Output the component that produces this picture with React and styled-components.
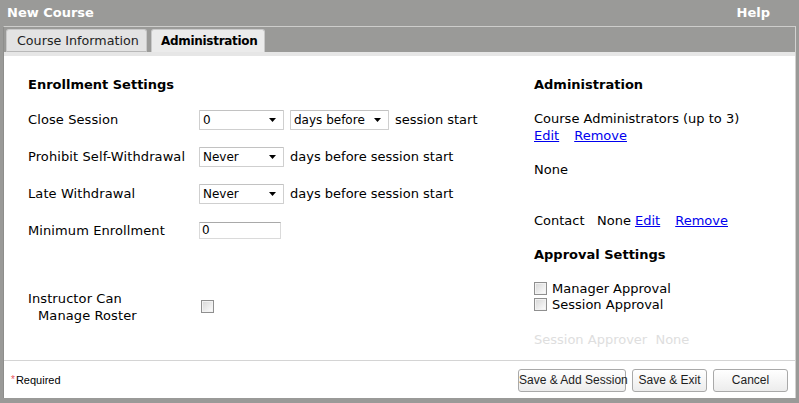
import styled, { createGlobalStyle } from "styled-components";

const GlobalStyle = createGlobalStyle`
    html, body {
        margin: 0;
        padding: 0;
        background: #9a9a98;
    }
    body {
        font-family: "DejaVu Sans", Verdana, sans-serif;
        font-size: 13px;
        color: #000;
    }
`;

const Arrow = () => (
    <svg width="7" height="4" viewBox="0 0 7 4">
        <path d="M0 0 H7 L3.5 4 Z" fill="#000" />
    </svg>
);

const Select = ({ value, width }) => (
    <SelectBox $width={width}>
        <span>{value}</span>
        <ArrowSlot>
            <Arrow />
        </ArrowSlot>
    </SelectBox>
);

const App = () => {
    return (
        <>
            <GlobalStyle />
            <Window>
                <TitleBar>
                    <span>New Course</span>
                    <span>Help</span>
                </TitleBar>
                <Frame>
                    <TabStrip>
                        <Tab $width={141}>Course Information</Tab>
                        <Tab $width={114} $active>Administration</Tab>
                    </TabStrip>
                    <Panel>
                        <Column>
                            <Heading>Enrollment Settings</Heading>
                            <Rows>
                                <Row>
                                    <Label>Close Session</Label>
                                    <Field>
                                        <Select value="0" width={85} />
                                        <Select value="days before" width={99} />
                                        <span>session start</span>
                                    </Field>
                                </Row>
                                <Row>
                                    <Label>Prohibit Self-Withdrawal</Label>
                                    <Field>
                                        <Select value="Never" width={85} />
                                        <span>days before session start</span>
                                    </Field>
                                </Row>
                                <Row>
                                    <Label>Late Withdrawal</Label>
                                    <Field>
                                        <Select value="Never" width={85} />
                                        <span>days before session start</span>
                                    </Field>
                                </Row>
                                <Row>
                                    <Label>Minimum Enrollment</Label>
                                    <Field>
                                        <TextInput defaultValue="0" />
                                    </Field>
                                </Row>
                                <Row $gap>
                                    <Label>
                                        Instructor Can
                                        <Indent>Manage Roster</Indent>
                                    </Label>
                                    <Field>
                                        <Check type="checkbox" $offset />
                                    </Field>
                                </Row>
                            </Rows>
                        </Column>
                        <Column>
                            <Heading>Administration</Heading>
                            <Block $top={17}>
                                <div>Course Administrators (up to 3)</div>
                                <div>
                                    <Link>Edit</Link>
                                    <Link $left={15}>Remove</Link>
                                </div>
                            </Block>
                            <Block $top={17}>None</Block>
                            <Block $top={34}>
                                Contact&nbsp;&nbsp; None <Link>Edit</Link>
                                <Link $left={15}>Remove</Link>
                            </Block>
                            <Heading $top={18}>Approval Settings</Heading>
                            <Checks>
                                <CheckLine>
                                    <Check type="checkbox" />
                                    Manager Approval
                                </CheckLine>
                                <CheckLine>
                                    <Check type="checkbox" />
                                    Session Approval
                                </CheckLine>
                            </Checks>
                            <Block $top={19} $muted>
                                Session Approver&nbsp; None
                            </Block>
                        </Column>
                    </Panel>
                    <Footer>
                        <Required>
                            <Star>*</Star>Required
                        </Required>
                        <Buttons>
                            <Button $width={108}>Save &amp; Add Session</Button>
                            <Button $width={75}>Save &amp; Exit</Button>
                            <Button $width={75}>Cancel</Button>
                        </Buttons>
                    </Footer>
                </Frame>
            </Window>
        </>
    );
};

const Window = styled.div`
    height: 403px;
    width: 799px;
    display: flex;
    flex-direction: column;
    padding-bottom: 5px;
    box-sizing: border-box;
`;

const TitleBar = styled.div`
    flex-shrink: 0;
    height: 26px;
    display: flex;
    align-items: center;
    justify-content: space-between;
    padding: 0 29px 1px 7px;
    box-sizing: border-box;
    color: #fff;
    font-weight: bold;
    font-size: 13px;
`;

const Frame = styled.div`
    flex: 1;
    display: flex;
    flex-direction: column;
    margin: 0 3px 0 3px;
    border-top: 1px solid #cdcdcb;
    border-right: 1px solid #d2d2d0;
    border-left: 1px solid #8e8e8c;
`;

const TabStrip = styled.div`
    flex-shrink: 0;
    height: 25px;
    display: flex;
    align-items: flex-end;
    gap: 4px;
    padding-left: 2px;
    box-sizing: border-box;
`;

const Tab = styled.div`
    width: ${(p) => p.$width}px;
    height: 23px;
    box-sizing: border-box;
    padding: 0 0 0 ${(p) => (p.$active ? 9 : 10)}px;
    display: flex;
    align-items: center;
    border: 1px solid #c9c9c9;
    border-bottom: ${(p) => (p.$active ? "none" : "1px solid #b8b8b8")};
    border-radius: 3px 3px 0 0;
    background: ${(p) => (p.$active ? "#ebebeb" : "#e3e3e3")};
    color: ${(p) => (p.$active ? "#000" : "#222")};
    font-weight: ${(p) => (p.$active ? "bold" : "normal")};
    font-size: ${(p) => (p.$active ? "12px" : "12.7px")};
    letter-spacing: ${(p) => (p.$active ? "-0.3px" : "0")};
    white-space: nowrap;
`;

const Panel = styled.div`
    flex-shrink: 0;
    height: 308px;
    box-sizing: border-box;
    background: #fff;
    border-top: 4px solid #e6e6e6;
    display: grid;
    grid-template-columns: 506px 1fr;
    align-content: start;
    padding: 21px 0 0 24px;
`;

const Column = styled.div`
    display: flex;
    flex-direction: column;
`;

const Heading = styled.div`
    font-weight: bold;
    line-height: 16px;
    margin-top: ${(p) => p.$top || 0}px;
`;

const Rows = styled.div`
    display: flex;
    flex-direction: column;
    margin-top: 8px;
`;

const Row = styled.div`
    display: grid;
    grid-template-columns: 171px 1fr;
    align-items: center;
    height: 37px;
    margin-top: ${(p) => (p.$gap ? 39 : 0)}px;
`;

const Label = styled.div`
    line-height: 17px;
    letter-spacing: 0.1px;
`;

const Indent = styled.div`
    padding-left: 10px;
`;

const Field = styled.div`
    display: flex;
    align-items: center;
    gap: 6px;
`;

const SelectBox = styled.div`
    width: ${(p) => p.$width}px;
    height: 20px;
    box-sizing: border-box;
    border: 1px solid #cfcfcf;
    border-top-color: #c2c2c2;
    border-radius: 1px;
    background: #fff;
    display: flex;
    align-items: center;
    justify-content: space-between;
    padding: 0 0 0 3px;
    font-size: 12px;
`;

const ArrowSlot = styled.span`
    width: 13px;
    display: flex;
    align-items: center;
    margin-right: 1px;
`;

const TextInput = styled.input`
    width: 82px;
    height: 17px;
    margin-top: -1px;
    box-sizing: border-box;
    border: 1px solid #dadada;
    border-top-color: #a9a9a9;
    padding: 0 2px;
    font-family: "DejaVu Sans", Verdana, sans-serif;
    font-size: 12px;
    color: #000;
    outline: none;
`;

const Check = styled.input`
    appearance: none;
    margin: 0 ${(p) => (p.$offset ? 0 : 5)}px 0 ${(p) => (p.$offset ? 2 : 0)}px;
    width: 13px;
    height: 13px;
    box-sizing: border-box;
    border: 1px solid #8f8f8f;
    background: linear-gradient(135deg, #d6d6d6 0%, #f6f6f6 80%, #fff 100%);
    box-shadow: inset 0 0 0 1px #f2f2f2;
`;

const Block = styled.div`
    line-height: 17px;
    margin-top: ${(p) => p.$top}px;
    color: ${(p) => (p.$muted ? "#dedede" : "#000")};
`;

const Link = styled.a`
    color: #0000ee;
    text-decoration: underline;
    cursor: pointer;
    margin-left: ${(p) => p.$left || 0}px;
`;

const Checks = styled.div`
    display: flex;
    flex-direction: column;
    margin-top: 17px;
`;

const CheckLine = styled.label`
    display: flex;
    align-items: center;
    height: 16px;
`;

const Footer = styled.div`
    flex: 1;
    background: #fff;
    border-top: 1px solid #d4d4d4;
    display: flex;
    align-items: center;
    justify-content: space-between;
    padding: 0 7px 0 7px;
`;

const Required = styled.div`
    font-family: "Liberation Sans", Arial, sans-serif;
    font-size: 11px;
    display: flex;
    align-items: center;
    margin-top: 1px;
`;

const Star = styled.span`
    color: #e8565f;
    font-size: 10px;
    margin-right: 1px;
    position: relative;
    top: -1px;
`;

const Buttons = styled.div`
    display: flex;
    gap: 6px;
    margin-top: 1px;
`;

const Button = styled.button`
    width: ${(p) => p.$width}px;
    height: 23px;
    padding: 0;
    border: 1px solid #a9a9a9;
    border-radius: 3px;
    background: linear-gradient(#ffffff, #ececec);
    font-family: "Liberation Sans", Arial, sans-serif;
    font-size: 12px;
    color: #1e1e1e;
    white-space: nowrap;
`;

export default App;
